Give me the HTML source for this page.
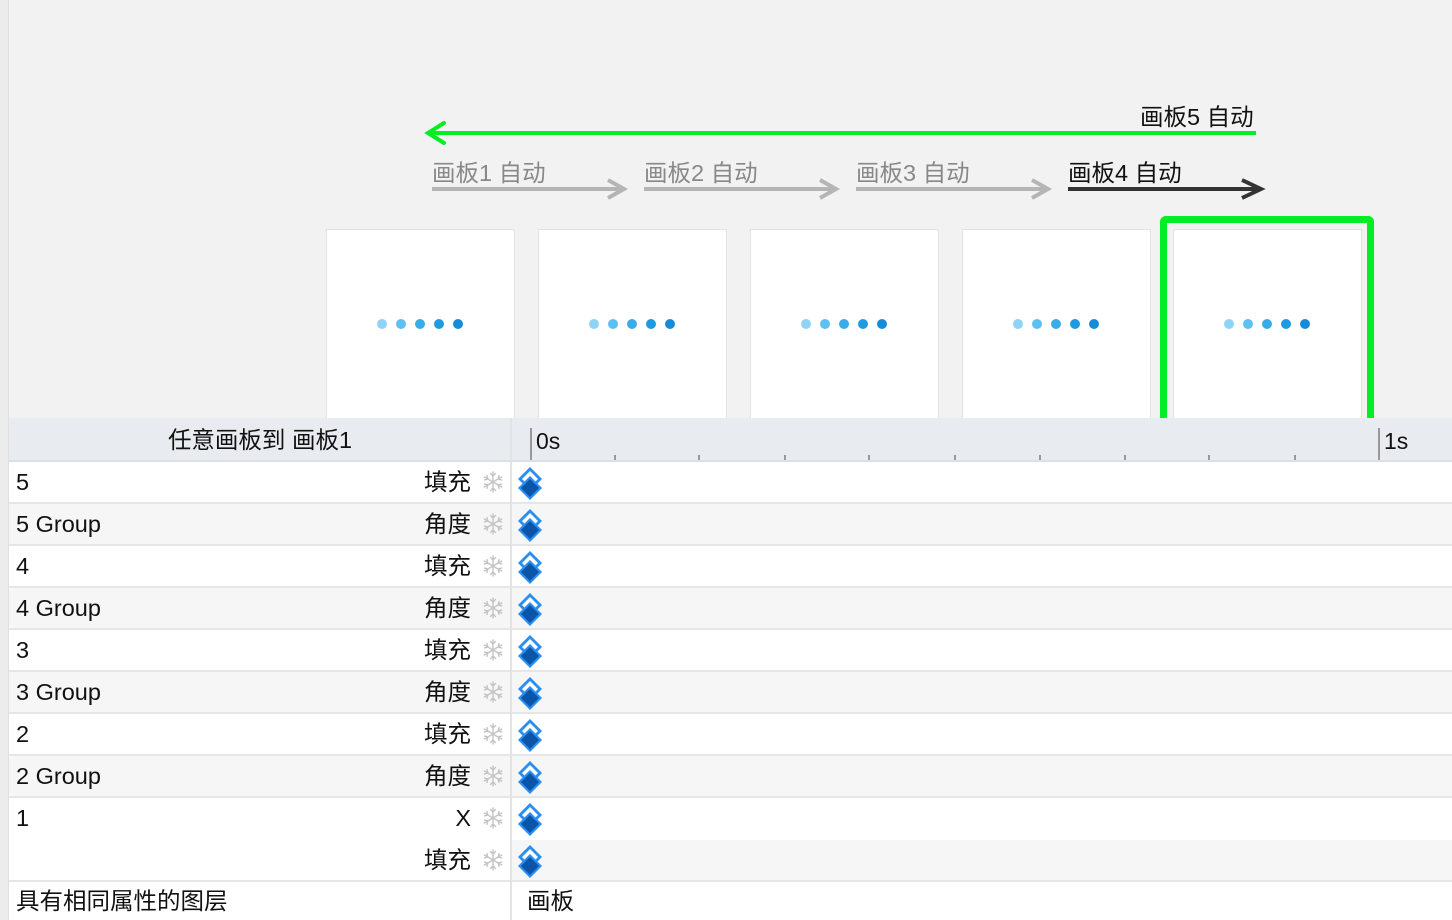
<!DOCTYPE html>
<html><head><meta charset="utf-8"><style>
*{margin:0;padding:0;box-sizing:border-box}
body{width:1452px;height:920px;background:#f2f2f2;position:relative;overflow:hidden;font-family:"Liberation Sans","Noto Sans CJK SC",sans-serif;color:#111}
.abs{position:absolute}
.card{position:absolute;top:229px;width:189px;height:190px;background:#fff;border:1px solid #e2e2e2;border-bottom:none}
.dots{position:absolute;top:88px;left:50%;margin-left:-48px;width:94px;height:12px}
.lbl{position:absolute;font-size:23.5px;line-height:28px;white-space:nowrap}
.row{position:absolute;left:9px;width:1443px;height:42px;border-bottom:2px solid #e6e6e6}
.row .l{position:absolute;left:7px;top:0;font-size:23.5px;line-height:40px;white-space:nowrap}
.row .r{position:absolute;right:981px;top:0;font-size:23.5px;line-height:40px}
.row .sf{position:absolute;left:473px;top:9px}
.row .dm{position:absolute;left:507px;top:4px}
.row .lp{position:absolute;left:0;top:0;width:502px;height:100%;}
</style></head><body>
<div class="abs" style="left:0;top:0;width:9px;height:920px;background:#ececec;border-right:1px solid #e0e0e0"></div>

<svg class="abs" style="left:0;top:0" width="1452" height="420">
 <g stroke="#00ee22" stroke-width="4" fill="none">
  <line x1="428" y1="133" x2="1256" y2="133"/>
  <polyline points="444,123 428,133 444,143" stroke-linecap="round"/>
 </g>
 <g stroke="#b5b5b5" stroke-width="4" fill="none">
  <line x1="432" y1="189" x2="624" y2="189"/><polyline points="608,180 624,189 608,198"/>
  <line x1="644" y1="189" x2="836" y2="189"/><polyline points="820,180 836,189 820,198"/>
  <line x1="856" y1="189" x2="1048" y2="189"/><polyline points="1032,180 1048,189 1032,198"/>
 </g>
 <g stroke="#333" stroke-width="4" fill="none">
  <line x1="1068" y1="189" x2="1261" y2="189"/><polyline points="1242,180 1261,189 1242,198"/>
 </g>
</svg>
<div class="lbl" style="left:1140px;top:103px">画板5 自动</div>
<div class="lbl" style="left:432px;top:159px;color:#888">画板1 自动</div>
<div class="lbl" style="left:644px;top:159px;color:#888">画板2 自动</div>
<div class="lbl" style="left:856px;top:159px;color:#888">画板3 自动</div>
<div class="lbl" style="left:1068px;top:159px">画板4 自动</div>

<div class="abs" style="left:1160px;top:216px;width:214px;height:210px;border:7px solid #00ee22;border-bottom:none;border-radius:6px 6px 0 0"></div>
<div class="card" style="left:326px"><svg class="dots" viewBox="0 0 94 12"><circle cx="9" cy="6" r="5" fill="#8fd4f6"/><circle cx="28" cy="6" r="5" fill="#5ec0f0"/><circle cx="47" cy="6" r="5" fill="#38ace9"/><circle cx="66" cy="6" r="5" fill="#1e9ae2"/><circle cx="85" cy="6" r="5" fill="#178bd6"/></svg></div>
<div class="card" style="left:538px"><svg class="dots" viewBox="0 0 94 12"><circle cx="9" cy="6" r="5" fill="#8fd4f6"/><circle cx="28" cy="6" r="5" fill="#5ec0f0"/><circle cx="47" cy="6" r="5" fill="#38ace9"/><circle cx="66" cy="6" r="5" fill="#1e9ae2"/><circle cx="85" cy="6" r="5" fill="#178bd6"/></svg></div>
<div class="card" style="left:750px"><svg class="dots" viewBox="0 0 94 12"><circle cx="9" cy="6" r="5" fill="#8fd4f6"/><circle cx="28" cy="6" r="5" fill="#5ec0f0"/><circle cx="47" cy="6" r="5" fill="#38ace9"/><circle cx="66" cy="6" r="5" fill="#1e9ae2"/><circle cx="85" cy="6" r="5" fill="#178bd6"/></svg></div>
<div class="card" style="left:962px"><svg class="dots" viewBox="0 0 94 12"><circle cx="9" cy="6" r="5" fill="#8fd4f6"/><circle cx="28" cy="6" r="5" fill="#5ec0f0"/><circle cx="47" cy="6" r="5" fill="#38ace9"/><circle cx="66" cy="6" r="5" fill="#1e9ae2"/><circle cx="85" cy="6" r="5" fill="#178bd6"/></svg></div>
<div class="card" style="left:1173px"><svg class="dots" viewBox="0 0 94 12"><circle cx="9" cy="6" r="5" fill="#8fd4f6"/><circle cx="28" cy="6" r="5" fill="#5ec0f0"/><circle cx="47" cy="6" r="5" fill="#38ace9"/><circle cx="66" cy="6" r="5" fill="#1e9ae2"/><circle cx="85" cy="6" r="5" fill="#178bd6"/></svg></div>

<div class="abs" style="left:9px;top:418px;width:1443px;height:44px;background:#e8ecf0;border-bottom:2px solid #dcdfe3"></div>
<div class="abs" style="left:9px;top:418px;width:502px;height:44px;text-align:center;font-size:23.5px;line-height:44px">任意画板到 画板1</div>
<div class="abs" style="left:510px;top:418px;width:2px;height:502px;background:#e3e3e3"></div>
<svg class="abs" style="left:512px;top:418px" width="940" height="44">
 <line x1="19" y1="10" x2="19" y2="42" stroke="#999" stroke-width="2"/>
 <line x1="867" y1="10" x2="867" y2="42" stroke="#999" stroke-width="2"/>
 <g stroke="#999" stroke-width="2">
  <line x1="103" y1="37" x2="103" y2="42"/><line x1="187" y1="37" x2="187" y2="42"/><line x1="273" y1="37" x2="273" y2="42"/><line x1="357" y1="37" x2="357" y2="42"/><line x1="443" y1="37" x2="443" y2="42"/><line x1="528" y1="37" x2="528" y2="42"/><line x1="613" y1="37" x2="613" y2="42"/><line x1="697" y1="37" x2="697" y2="42"/><line x1="783" y1="37" x2="783" y2="42"/>
 </g>
 <text x="24" y="31" font-size="23" font-family="Liberation Sans" fill="#111">0s</text>
 <text x="872" y="31" font-size="23" font-family="Liberation Sans" fill="#111">1s</text>
</svg>

<svg width="0" height="0" style="position:absolute"><defs>
 <g id="sf" stroke="#c4c4c4" stroke-width="1.4" fill="none" stroke-linecap="round">
  <g id="sp"><line x1="11" y1="11" x2="11" y2="1"/><polyline points="8.5,2.5 11,5 13.5,2.5"/></g>
  <use href="#sp" transform="rotate(60 11 11)"/><use href="#sp" transform="rotate(120 11 11)"/><use href="#sp" transform="rotate(180 11 11)"/><use href="#sp" transform="rotate(240 11 11)"/><use href="#sp" transform="rotate(300 11 11)"/>
 </g>
 <g id="dm">
  <polygon points="14,1 26,13 14,25 2,13" fill="#2a8ef0"/>
  <polygon points="14,5 22,13 14,21 6,13" fill="#fff"/>
  <polygon points="14,10 26,22 14,34 2,22" fill="#2a8ef0"/>
  <polygon points="14,13 23,22 14,31 5,22" fill="#0b55a8"/>
 </g>
</defs></svg>

<div class="row" style="top:462px;background:#fff"><span class="l">5</span><span class="r">填充</span><svg class="sf" width="22" height="22"><use href="#sf"/></svg><svg class="dm" width="28" height="35"><use href="#dm"/></svg></div>
<div class="row" style="top:504px;background:#f6f6f6"><span class="l">5 Group</span><span class="r">角度</span><svg class="sf" width="22" height="22"><use href="#sf"/></svg><svg class="dm" width="28" height="35"><use href="#dm"/></svg></div>
<div class="row" style="top:546px;background:#fff"><span class="l">4</span><span class="r">填充</span><svg class="sf" width="22" height="22"><use href="#sf"/></svg><svg class="dm" width="28" height="35"><use href="#dm"/></svg></div>
<div class="row" style="top:588px;background:#f6f6f6"><span class="l">4 Group</span><span class="r">角度</span><svg class="sf" width="22" height="22"><use href="#sf"/></svg><svg class="dm" width="28" height="35"><use href="#dm"/></svg></div>
<div class="row" style="top:630px;background:#fff"><span class="l">3</span><span class="r">填充</span><svg class="sf" width="22" height="22"><use href="#sf"/></svg><svg class="dm" width="28" height="35"><use href="#dm"/></svg></div>
<div class="row" style="top:672px;background:#f6f6f6"><span class="l">3 Group</span><span class="r">角度</span><svg class="sf" width="22" height="22"><use href="#sf"/></svg><svg class="dm" width="28" height="35"><use href="#dm"/></svg></div>
<div class="row" style="top:714px;background:#fff"><span class="l">2</span><span class="r">填充</span><svg class="sf" width="22" height="22"><use href="#sf"/></svg><svg class="dm" width="28" height="35"><use href="#dm"/></svg></div>
<div class="row" style="top:756px;background:#f6f6f6"><span class="l">2 Group</span><span class="r">角度</span><svg class="sf" width="22" height="22"><use href="#sf"/></svg><svg class="dm" width="28" height="35"><use href="#dm"/></svg></div>
<div class="row" style="top:798px;background:#fff;border-bottom:none"><span class="l">1</span><span class="r">X</span><svg class="sf" width="22" height="22"><use href="#sf"/></svg><svg class="dm" width="28" height="35"><use href="#dm"/></svg></div>
<div class="row" style="top:840px;background:#f6f6f6"><div class="lp" style="background:#fff"></div><span class="r">填充</span><svg class="sf" width="22" height="22"><use href="#sf"/></svg><svg class="dm" width="28" height="35"><use href="#dm"/></svg></div>
<div class="row" style="top:882px;background:#fff;border:none;height:38px"><span class="l" style="line-height:38px">具有相同属性的图层</span><span class="l" style="left:518px;line-height:38px">画板</span></div>
<div class="abs" style="left:510px;top:462px;width:2px;height:458px;background:#e3e3e3"></div>
</body></html>
